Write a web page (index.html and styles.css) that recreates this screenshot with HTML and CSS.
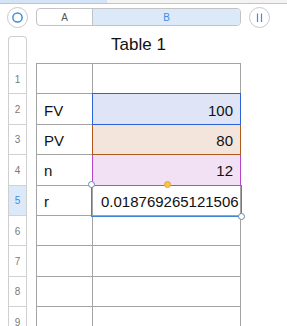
FILE: index.html
```html
<html>
    <head>
        <link rel="stylesheet" href="styles.css">
    </head>
    <body>
        <div class="topstrip"><div class="topstrip-fill"></div></div>
        <div class="toolbar">
            <div class="roundbtn">
                <svg width="21" height="21" viewBox="0 0 21 21"><circle cx="10.5" cy="10.5" r="4.6" fill="none" stroke="#3b8ee8" stroke-width="1.5"/></svg>
            </div>
            <div class="colheads">
                <div class="colhead colhead-a">A</div>
                <div class="colhead colhead-b">B</div>
            </div>
            <div class="roundbtn">
                <svg width="21" height="21" viewBox="0 0 21 21"><path d="M8.5 6.5V15M12.5 6.5V15" stroke="#3b8ee8" stroke-width="1.2"/></svg>
            </div>
        </div>
        <div class="sheet">
            <div class="rowheads">
                <div class="rh-corner"></div>
                <div class="rh">1</div>
                <div class="rh">2</div>
                <div class="rh">3</div>
                <div class="rh">4</div>
                <div class="rh rh-active">5</div>
                <div class="rh">6</div>
                <div class="rh">7</div>
                <div class="rh">8</div>
                <div class="rh">9</div>
            </div>
            <div class="tablewrap">
                <div class="title">Table 1</div>
                <div class="grid">
                    <div class="row"><div class="cell cell-a"></div><div class="cell cell-b"></div></div>
                    <div class="row"><div class="cell cell-a">FV</div><div class="cell cell-b num ref-blue">100</div></div>
                    <div class="row"><div class="cell cell-a">PV</div><div class="cell cell-b num ref-brown">80</div></div>
                    <div class="row"><div class="cell cell-a">n</div><div class="cell cell-b num ref-pink">12</div></div>
                    <div class="row"><div class="cell cell-a">r</div><div class="cell cell-b selected">0.018769265121506
                        <div class="selbox">
                            <span class="handle handle-tl"></span>
                            <span class="handle handle-mid"></span>
                            <span class="handle handle-br"></span>
                        </div>
                    </div></div>
                    <div class="row"><div class="cell cell-a"></div><div class="cell cell-b"></div></div>
                    <div class="row"><div class="cell cell-a"></div><div class="cell cell-b"></div></div>
                    <div class="row"><div class="cell cell-a"></div><div class="cell cell-b"></div></div>
                    <div class="row"><div class="cell cell-a"></div><div class="cell cell-b"></div></div>
                </div>
            </div>
        </div>
    </body>
</html>
```

FILE: styles.css
```css
html, body {
    margin: 0;
    background: #ffffff;
    overflow: hidden;
    font-family: "Liberation Sans", Arial, sans-serif;
}
.topstrip {
    height: 3px;
    background: #f3f3f3;
    border-bottom: 1px solid #c4c4c4;
}
.topstrip-fill {
    width: 107px;
    height: 3px;
    background: #d4e3f5;
}
.toolbar {
    height: 26px;
    display: flex;
    align-items: center;
    padding-left: 7px;
    gap: 8px;
}
.roundbtn {
    width: 21px;
    height: 21px;
    box-sizing: border-box;
    border: 1px solid #c9c9c9;
    border-radius: 50%;
    background: #ffffff;
    display: flex;
    align-items: center;
    justify-content: center;
}
.roundbtn svg {
    display: block;
    flex: none;
}
.colheads {
    width: 205px;
    height: 18px;
    box-sizing: border-box;
    border: 1px solid #c3c3c3;
    border-radius: 4px;
    display: flex;
    overflow: hidden;
}
.colhead {
    display: flex;
    align-items: center;
    justify-content: center;
    font-size: 10px;
    padding-top: 1px;
}
.colhead-a {
    width: 55px;
    color: #555555;
    border-right: 1px solid #c3c3c3;
}
.colhead-b {
    flex: 1;
    background: #dce9f9;
    color: #3d8de6;
}
.sheet {
    display: flex;
    padding-left: 8px;
    padding-top: 6px;
}
.rowheads {
    width: 19px;
    box-sizing: border-box;
    border: 1px solid #cfcfcf;
    border-bottom: none;
    border-radius: 4px 4px 0 0;
    height: 320px;
}
.rh-corner {
    height: 26px;
}
.rh {
    height: 30.375px;
    box-sizing: border-box;
    border-top: 1px solid #d2d2d2;
    display: flex;
    align-items: center;
    justify-content: center;
    font-size: 10px;
    color: #7a7a7a;
    padding-top: 1px;
}
.rh-active {
    background: #dce9f9;
    color: #3d8de6;
}
.tablewrap {
    margin-left: 9px;
}
.title {
    height: 27px;
    line-height: 17px;
    font-size: 17px;
    text-align: center;
    color: #111111;
}
.grid {
    border-top: 1px solid #a4a4a4;
    border-left: 1px solid #a4a4a4;
    width: 205px;
    box-sizing: border-box;
}
.row {
    display: flex;
    height: 30.375px;
}
.cell {
    position: relative;
    box-sizing: border-box;
    border-right: 1px solid #a4a4a4;
    border-bottom: 1px solid #a4a4a4;
    display: flex;
    align-items: center;
    padding: 2px 7px 0 7px;
    font-size: 15px;
    color: #111111;
    white-space: nowrap;
}
.cell-a {
    width: 56px;
}
.cell-b {
    width: 148px;
}
.num {
    justify-content: flex-end;
}
.ref-blue {
    background: #dfe5f7;
    z-index: 3;
}
.ref-brown {
    background: #f4e5dc;
    z-index: 2;
}
.ref-pink {
    background: #f2e0f4;
    z-index: 1;
}
.ref-blue::before, .ref-brown::before, .ref-pink::before {
    content: "";
    position: absolute;
    top: -1px;
    left: -1px;
    right: -1px;
    bottom: -1px;
    border: 1px solid;
}
.ref-blue::before { border-color: #2d63d8; }
.ref-brown::before { border-color: #b3581c; }
.ref-pink::before { border-color: #b445c8; }
.selected {
    padding-left: 8px;
    overflow: visible;
    z-index: 4;
}
.selbox {
    position: absolute;
    top: -1px;
    left: -2px;
    right: -2px;
    bottom: -2px;
    border: 1px solid #3e87d6;
}
.handle {
    position: absolute;
    width: 7px;
    height: 7px;
    box-sizing: border-box;
    border-radius: 50%;
    border: 1px solid #6f86ab;
    background: #ffffff;
}
.handle-tl {
    top: -5px;
    left: -4px;
}
.handle-br {
    bottom: -4px;
    right: -4px;
}
.handle-mid {
    top: -5px;
    left: 72px;
    background: #f6c646;
    border-color: #e0a53a;
}
```
